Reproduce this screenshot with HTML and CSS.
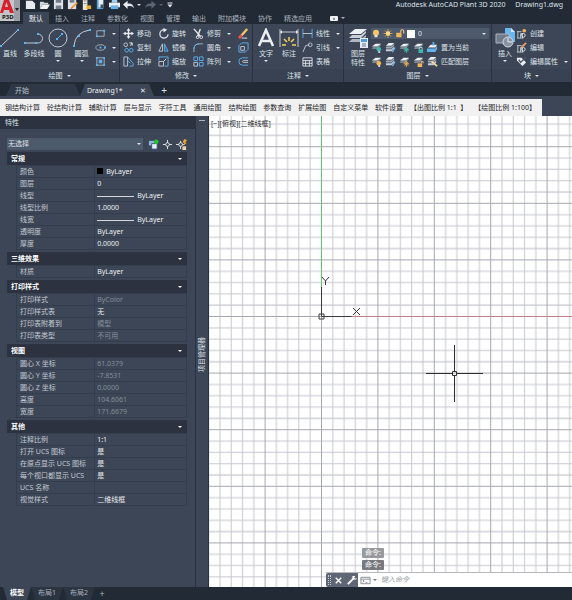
FILE: index.html
```html
<!DOCTYPE html>
<html lang="zh-CN">
<head>
    <meta charset="UTF-8">
    <meta name="viewport" content="width=device-width, initial-scale=1.0">
    <title>Autodesk AutoCAD Plant 3D 2020 - Drawing1.dwg</title>
    <link rel="stylesheet" href="styles.css">
</head>
<body>

<!-- Shared icons -->
<svg class="sprite" aria-hidden="true">
    <symbol id="i-bulb" viewBox="0 0 12 12"><circle cx="6" cy="5" r="4" fill="#f6c667"/><path d="M4 8h4v3H4z" fill="#e8e0d0"/></symbol>
    <symbol id="i-sun" viewBox="0 0 12 12"><path d="M6 0v12M0 6h12M2 2l8 8M10 2l-8 8" stroke="#f2b04a"/><circle cx="6" cy="6" r="3" fill="#ffd98a"/></symbol>
    <symbol id="i-lock" viewBox="0 0 12 12"><path d="M1 5h7v6H1z" fill="#f3b65c"/><path d="M7 5V3q0-2 2-2t2 2v3" fill="none" stroke="#f3c987" stroke-width="1.5"/></symbol>
    <symbol id="i-layer" viewBox="0 0 12 12"><path d="M1 5l4-3h6L7 5z" fill="#eef1f4"/><path d="M1 7l1-1h5l3-3h1L7 7z" fill="#b9c1cb"/></symbol>
    <symbol id="i-layers" viewBox="0 0 12 12"><path d="M1 4l3-3h6L7 4z" fill="#eef1f4"/><path d="M1 5h6l3-3v2L7 7H1z" fill="#9ea8b5"/><path d="M1 8h6l3-3v2L7 10H1z" fill="#c6cdd6"/></symbol>
    <symbol id="i-teal" viewBox="0 0 12 12"><use href="#i-layer"/><circle cx="8.500" cy="8" r="2.500" fill="#3fb8b4"/><path d="M8 10h2v2H8z" fill="#d5dbe2"/></symbol>
    <symbol id="i-yellow" viewBox="0 0 12 12"><use href="#i-layer"/><circle cx="8.500" cy="8" r="2.500" fill="#f5bb55"/><path d="M8 10h2v2H8z" fill="#d5dbe2"/></symbol>
    <symbol id="i-pen" viewBox="0 0 12 12"><use href="#i-layers"/><path d="M8 11l3-5" stroke="#69b4ec" stroke-width="1.500"/></symbol>
    <symbol id="i-freeze" viewBox="0 0 12 12"><use href="#i-layer"/><path d="M8 5v7M5 8.500h6M6 6.500l4 4M10 6.500l-4 4" stroke="#46c3b0"/></symbol>
    <symbol id="i-thaw" viewBox="0 0 12 12"><use href="#i-layer"/><path d="M8 5v7M5 8.500h6M6 6.500l4 4M10 6.500l-4 4" stroke="#f1b550"/></symbol>
    <symbol id="i-locked" viewBox="0 0 12 12"><use href="#i-layer"/><path d="M6 8h5v4H6z" fill="#3fb8b4"/><path d="M7 8V6h3v2" fill="none" stroke="#8fded8"/></symbol>
    <symbol id="i-unlocked" viewBox="0 0 12 12"><use href="#i-layer"/><path d="M5 8h5v4H5z" fill="#f3b65c"/><path d="M9 8V6h2v2" fill="none" stroke="#f3c987"/></symbol>
    <symbol id="i-block" viewBox="0 0 12 12"><path d="M1 4h5M1 11h7M2 4v7M5 11V6h2v5" fill="none" stroke="#c3cad4"/><circle cx="8" cy="8" r="2" fill="none" stroke="#dfe4ea"/></symbol>
</svg>

<header class="titlebar">
    <button class="app-logo" aria-label="应用程序菜单">
        <svg viewBox="0 0 20 21"><path d="M0 0h20v21H0z" fill="#c3c5c8"/><path d="M14 0h6v21h-6z" fill="#9b9fa5"/><path d="M0 13L4 0h5l5 13h-4L9 10H4l-1 3z" fill="#d8202c"/><path d="M5 7l1.500-5L8 7z" fill="#f0c4c6"/><path d="M15 8h4l-2 3z" fill="#222"/></svg>
        <span>P3D</span>
    </button>
    <div class="quick-access">
        <button aria-label="新建"><svg viewBox="0 0 12 12"><path d="M1 2h7l3 3v6H1z" fill="#e7eaee"/></svg></button>
        <button aria-label="打开"><svg viewBox="0 0 12 12"><path d="M1 3h4l1 1h4v2H4l-3 5z" fill="#cfd4da"/><path d="M4 6h8l-3 5H1z" fill="#f0f2f4"/></svg></button>
        <button aria-label="保存"><svg viewBox="0 0 12 12"><path d="M1 1h10v10H1z" fill="#dfe3e8"/><path d="M3 1h6v3H3zM3 7h6v4H3z" fill="#717b8a"/></svg></button>
        <button aria-label="另存为"><svg viewBox="0 0 12 12"><path d="M1 1h9v10H1z" fill="#dfe3e8"/><path d="M3 1h5v3H3z" fill="#717b8a"/><path d="M5 10l6-6" stroke="#e9a23c" stroke-width="2"/><path d="M4 11l2-2" stroke="#d44"/></svg></button>
        <button aria-label="项目"><svg viewBox="0 0 12 12"><path d="M2 0h5v12H2z" fill="#e9e5d5"/><path d="M3 2h3M3 5h3" stroke="#7d838c"/><path d="M6 7h5v4H6z" fill="#e8b030"/></svg></button>
        <button aria-label="打印预览"><svg viewBox="0 0 12 12"><path d="M2 0h7v11H2z" fill="#5da7dd"/><path d="M4 1h5v8H4z" fill="#e6edf4"/><path d="M6 6h3v4H6z" fill="#47505f"/></svg></button>
        <button aria-label="打印"><svg viewBox="0 0 12 12"><path d="M3 0h6v4H3z" fill="#9fd0f5"/><path d="M0 4h12v5H0z" fill="#eceff2"/><path d="M2 7h8v4H2z" fill="#68b1e8"/></svg></button>
        <button aria-label="放弃"><svg viewBox="0 0 12 12"><path d="M0 6l5-4v3q6-1 7 5-2-3-7-2v3z" fill="#e7eaee"/></svg></button>
        <button class="tiny" aria-label="放弃列表"><i class="caret"></i></button>
        <button aria-label="重做"><svg viewBox="0 0 12 12"><path d="M12 6L7 2v3Q1 4 0 10q2-3 7-2v3z" fill="#5b6574"/></svg></button>
        <button class="tiny" aria-label="重做列表"><i class="caret dim"></i></button>
        <button class="tiny" aria-label="自定义"><svg viewBox="0 0 12 12"><path d="M1 2h10" stroke="#e7eaee" stroke-width="2"/><path d="M1 5h10l-5 6z" fill="#e7eaee"/></svg></button>
    </div>
    <h1>Autodesk AutoCAD Plant 3D 2020 <span>Drawing1.dwg</span></h1>
</header>

<nav class="ribbon-tabs">
    <a class="active" href="#home">默认</a>
    <a href="#insert">插入</a>
    <a href="#annotate">注释</a>
    <a href="#parametric">参数化</a>
    <a href="#view">视图</a>
    <a href="#manage">管理</a>
    <a href="#output">输出</a>
    <a href="#addins">附加模块</a>
    <a href="#collaborate">协作</a>
    <a href="#apps">精选应用</a>
    <button aria-label="功能区显示"><svg viewBox="0 0 8 5"><rect width="8" height="5" rx="1" fill="#eef0f3"/><path d="M3 3.500l1-2 1 2z" fill="#232b36"/></svg><i class="caret"></i></button>
</nav>

<section class="ribbon">
    <div class="panel">
        <div class="tools draw">
            <button class="big"><svg viewBox="0 0 20 20"><path d="M1 18L18 2" stroke="#c3cad4" fill="none"/><path d="M0 17h2v2H0zM17 1h2v2h-2z" fill="#5fb0ee"/></svg>直线</button>
            <button class="big"><svg viewBox="0 0 20 20"><path d="M1 15h13a4.500 4.500 0 0 0 0-9" stroke="#c3cad4" fill="none"/><path d="M0 14h2v2H0zM13 5h2v2h-2zM11 14h2v2h-2z" fill="#5fb0ee"/></svg>多段线</button>
            <button class="big"><svg viewBox="0 0 20 20"><circle cx="10" cy="10" r="9" stroke="#c3cad4" fill="none"/><path d="M9 11l5-5" stroke="#5fb0ee"/><path d="M8 10h2v2H8zM13 5h2v2h-2z" fill="#5fb0ee"/></svg>圆<i class="caret"></i></button>
            <button class="big"><svg viewBox="0 0 20 20"><path d="M2 18Q3 4 18 2" stroke="#c3cad4" fill="none"/><path d="M1 17h2v2H1zM6 7h2v2H6zM17 1h2v2h-2z" fill="#5fb0ee"/></svg>圆弧<i class="caret"></i></button>
            <div class="stack">
                <button class="tool" aria-label="矩形"><svg viewBox="0 0 12 12"><path d="M2 3h8v6H2z" stroke="#aab3c0" fill="none"/><path d="M1 8h2v2H1zM9 2h2v2H9z" fill="#5fb0ee"/></svg><i class="caret"></i></button>
                <button class="tool" aria-label="椭圆"><svg viewBox="0 0 12 12"><ellipse cx="6" cy="6" rx="5" ry="3" stroke="#aab3c0" fill="none"/><path d="M5 5h2v2H5zM10 5h2v2h-2z" fill="#5fb0ee"/></svg><i class="caret"></i></button>
                <button class="tool" aria-label="图案填充"><svg viewBox="0 0 12 12"><path d="M2 2h8v8H2z" stroke="#aab3c0" fill="none"/><path d="M4 4h4v4H4z" fill="#5fb0ee"/><path d="M1 1h2v2H1zM9 1h2v2H9zM1 9h2v2H1zM9 9h2v2H9z" fill="#5fb0ee"/></svg><i class="caret"></i></button>
            </div>
        </div>
        <button class="panel-title">绘图<i class="caret"></i></button>
    </div>

    <div class="panel">
        <div class="tools modify">
            <div class="stack">
                <button class="tool"><svg viewBox="0 0 12 12"><path d="M6 1v10M1 6h10" stroke="#e7eaee" stroke-width="1.500"/><path d="M6 0l2 3H4zM6 12l2-3H4zM0 6l3-2v4zM12 6L9 4v4z" fill="#e7eaee"/></svg>移动</button>
                <button class="tool"><svg viewBox="0 0 12 12"><circle cx="3" cy="3" r="2" stroke="#c3cad4" fill="none"/><path d="M7 1h3v3M8 4l2-3" stroke="#e7eaee" fill="none"/><circle cx="4" cy="9" r="2" stroke="#5fb0ee" fill="none"/><circle cx="9" cy="9" r="2" stroke="#5fb0ee" fill="none"/></svg>复制</button>
                <button class="tool"><svg viewBox="0 0 12 12"><path d="M1 1h4v10H1z" stroke="#c3cad4" fill="none"/><path d="M5 1l6 7v3H7M5 5l3 3" stroke="#5fb0ee" fill="none"/></svg>拉伸</button>
            </div>
            <div class="stack">
                <button class="tool"><svg viewBox="0 0 12 12"><path d="M7 2a4.500 4.500 0 1 0 4 5" stroke="#d5dae1" stroke-width="1.500" fill="none"/><path d="M6 0l4 2-4 3z" fill="#e7eaee"/></svg>旋转</button>
                <button class="tool"><svg viewBox="0 0 12 12"><path d="M5 2v8H1z" stroke="#c3cad4" fill="none"/><path d="M7 2v8h4z" stroke="#5fb0ee" fill="#39648c"/></svg>镜像</button>
                <button class="tool"><svg viewBox="0 0 12 12"><path d="M1 5V1h10v10H7" stroke="#5fb0ee" fill="none"/><path d="M1 6h5v5H1z" stroke="#c3cad4" fill="none"/><path d="M6 6l3-3" stroke="#e7eaee"/></svg>缩放</button>
            </div>
            <div class="stack">
                <button class="tool"><svg viewBox="0 0 12 12"><path d="M1 1l7 8M8 1L5 9" stroke="#e7eaee" stroke-width="1.500"/><circle cx="9" cy="10" r="1.500" stroke="#e7eaee" fill="none"/><circle cx="5" cy="10" r="1.500" stroke="#e7eaee" fill="none"/></svg>修剪<i class="caret"></i></button>
                <button class="tool"><svg viewBox="0 0 12 12"><path d="M1 11V8q0-6 6-6h4" stroke="#aab3c0" fill="none"/><path d="M1 8q0-6 6-6" stroke="#5fb0ee" fill="none"/></svg>圆角<i class="caret"></i></button>
                <button class="tool"><svg viewBox="0 0 12 12"><path d="M1 1h4v4H1zM7 1h4v4H7zM7 7h4v4H7z" stroke="#5fb0ee" fill="none"/><path d="M1 7h4v4H1z" stroke="#c3cad4" fill="none"/></svg>阵列<i class="caret"></i></button>
            </div>
            <div class="stack">
                <button class="tool" aria-label="删除"><svg viewBox="0 0 12 12"><path d="M4 8l6-7" stroke="#f3c66c" stroke-width="2.500"/><path d="M1 11l3-3" stroke="#e05a4e" stroke-width="3"/><path d="M4 11h6" stroke="#e7eaee"/></svg></button>
                <button class="tool" aria-label="分解"><svg viewBox="0 0 12 12"><path d="M1 4l3-3h7v7l-3 3H1z" stroke="#5fb0ee" fill="none"/><path d="M3 5h4v4H3z" stroke="#c3cad4" fill="none"/></svg></button>
                <button class="tool" aria-label="偏移"><svg viewBox="0 0 12 12"><path d="M11 2H5a4 4 0 0 0 0 8h6" stroke="#5fb0ee" fill="none"/><path d="M11 5H6a1 1 0 0 0 0 2h5" stroke="#c3cad4" fill="none"/></svg></button>
            </div>
        </div>
        <button class="panel-title">修改<i class="caret"></i></button>
    </div>

    <div class="panel">
        <div class="tools annotate">
            <button class="big"><svg viewBox="0 0 20 20"><path d="M3 18L10 2l7 16M6 13h8" stroke="#eceff2" stroke-width="2.500" fill="none"/></svg>文字<i class="caret"></i></button>
            <button class="big"><svg viewBox="0 0 20 20"><path d="M1 1v18M19 1v18M1 4h18" stroke="#c3cad4" fill="none"/><path d="M3 2L1 4l2 2zM17 2l2 2-2 2z" fill="#e7eaee"/><path d="M10 9v4M5 11l3 3M15 11l-3 3M3 17h4M13 17h4" stroke="#f5d264" stroke-width="1.500"/></svg>标注</button>
            <div class="stack">
                <button class="tool"><svg viewBox="0 0 12 12"><path d="M1 1v10M11 1v10" stroke="#5fb0ee"/><path d="M1 6h10" stroke="#c3cad4"/></svg>线性<i class="caret"></i></button>
                <button class="tool"><svg viewBox="0 0 12 12"><path d="M1 11l3-7 4-1" stroke="#c3cad4" fill="none"/><circle cx="9" cy="3" r="2" stroke="#c3cad4" fill="none"/></svg>引线<i class="caret"></i></button>
                <button class="tool"><svg viewBox="0 0 12 12"><path d="M1 2h10v9H1zM1 5h10M1 8h10M4 5v6M8 5v6" stroke="#dfe3e8" fill="none"/></svg>表格</button>
            </div>
        </div>
        <button class="panel-title">注释<i class="caret"></i></button>
    </div>

    <div class="panel">
        <div class="tools layers">
            <button class="big two-line"><svg viewBox="0 0 20 20"><path d="M1 6l6-5h12l-6 5z" fill="#eef1f4"/><path d="M1 10l3-3h9l5-4v2l-5 5z" fill="#c9cfd7"/><path d="M1 14l3-3h9l5-4v2l-5 5z" fill="#aeb6c1"/><path d="M12 10h8v10h-8z" fill="#e5eef7"/><path d="M13 11h6v3h-6z" fill="#4e9ee0"/><path d="M14 16h4M14 18h4" stroke="#6b7686"/></svg>图层<br>特性</button>
            <div class="stack layer-stack">
                <label class="layer-combo">
                    <svg><use href="#i-bulb"/></svg>
                    <svg><use href="#i-sun"/></svg>
                    <svg><use href="#i-lock"/></svg>
                    <span class="swatch"></span>
                    <select aria-label="图层"><option>0</option></select>
                    <i class="caret"></i>
                </label>
                <div class="icon-row">
                    <button aria-label="关"><svg><use href="#i-teal"/></svg></button>
                    <button aria-label="隔离"><svg><use href="#i-pen"/></svg></button>
                    <button aria-label="冻结"><svg><use href="#i-freeze"/></svg></button>
                    <button aria-label="锁定"><svg><use href="#i-locked"/></svg></button>
                    <button class="tool"><svg viewBox="0 0 12 12"><path d="M1 6l3-3h7L9 6z" fill="#eef1f4"/><path d="M0 7h9l2-3v4l-2 3H0z" fill="#63b1ea"/><path d="M7 0v4" stroke="#63b1ea" stroke-width="2"/></svg>置为当前</button>
                </div>
                <div class="icon-row">
                    <button aria-label="打开所有图层"><svg><use href="#i-yellow"/></svg></button>
                    <button aria-label="取消隔离"><svg><use href="#i-pen"/></svg></button>
                    <button aria-label="解冻"><svg><use href="#i-thaw"/></svg></button>
                    <button aria-label="解锁"><svg><use href="#i-unlocked"/></svg></button>
                    <button class="tool"><svg viewBox="0 0 12 12"><use href="#i-layers"/><path d="M5 6l6 5" stroke="#f3d9a0" stroke-width="2"/></svg>匹配图层</button>
                </div>
            </div>
        </div>
        <button class="panel-title">图层<i class="caret"></i></button>
    </div>

    <div class="panel">
        <div class="tools blocks">
            <button class="big"><svg viewBox="0 0 20 20"><path d="M10 0h6l4 4v10H10z" fill="#6ab8f2"/><path d="M16 0v4h4z" fill="#d3eafb"/><path d="M1 6h13v9H1z" fill="#707b8b" stroke="#aab3c0"/><circle cx="13" cy="14" r="5" fill="#8893a1" stroke="#d5dae1"/><path d="M13 10v4h4" stroke="#e7eaee" fill="none"/></svg>插入<i class="caret"></i></button>
            <div class="stack">
                <button class="tool"><svg viewBox="0 0 12 12"><use href="#i-block"/><circle cx="9" cy="3" r="2" fill="#f3b65c"/></svg>创建</button>
                <button class="tool"><svg viewBox="0 0 12 12"><use href="#i-block"/><path d="M6 6l5-5" stroke="#e89a6a" stroke-width="2"/></svg>编辑</button>
                <button class="tool"><svg viewBox="0 0 12 12"><path d="M1 2h5l5 5-4 4-6-6z" fill="#eceff2"/><path d="M3 4l2 3 6-6" stroke="#4b5666" stroke-width="1.500" fill="none"/></svg>编辑属性<i class="caret"></i></button>
            </div>
        </div>
        <button class="panel-title">块<i class="caret"></i></button>
    </div>
</section>

<nav class="file-tabs">
    <a class="file-tab start" href="#start">开始</a>
    <a class="file-tab current" href="#drawing1">Drawing1* <span>✕</span></a>
    <button aria-label="新图形">+</button>
</nav>

<div class="menu-row">
    <nav class="menubar">
        <a href="#m1">钢结构计算</a>
        <a href="#m2">砼结构计算</a>
        <a href="#m3">辅助计算</a>
        <a href="#m4">层与显示</a>
        <a href="#m5">字符工具</a>
        <a href="#m6">通用绘图</a>
        <a href="#m7">结构绘图</a>
        <a href="#m8">参数查询</a>
        <a href="#m9">扩展绘图</a>
        <a href="#m10">自定义菜单</a>
        <a href="#m11">软件设置</a>
        <a href="#m12">【出图比例 1:1 &nbsp;】</a>
        <a href="#m13">【绘图比例 1:100】</a>
    </nav>
</div>

<main class="workspace">
    <aside class="palette">
        <h2>特性</h2>
        <div class="selector">
            <div class="select-wrap">
                <select aria-label="选择对象"><option>无选择</option></select>
                <i class="caret"></i>
            </div>
            <button aria-label="切换 PICKADD"><svg viewBox="0 0 12 12"><path d="M1 2h6v5H1z" fill="#8fb6dc"/><path d="M4 5h6v6H4z" fill="#e7eef5" stroke="#34547a"/><circle cx="9" cy="3" r="2.500" fill="#28c22c"/></svg></button>
            <button aria-label="选择对象"><svg viewBox="0 0 12 12"><path d="M6 1v10M1 6h10" stroke="#e7eaee"/><circle cx="6" cy="6" r="2" fill="#3c4656" stroke="#e7eaee"/></svg></button>
            <button aria-label="快速选择"><svg viewBox="0 0 12 12"><path d="M5 2v9M0 6h9" stroke="#e7eaee"/><circle cx="5" cy="6" r="2" fill="#3c4656" stroke="#e7eaee"/><path d="M9 0l3 1-2 3h2L8 7l1-3H7z" fill="#f0a432"/><path d="M7 8h4v4H7z" fill="#e8d7b0"/></svg></button>
        </div>

        <section class="category">
            <button class="category-head">常规<i class="caret"></i></button>
            <table>
                <tr><th>颜色</th><td><span class="color-chip"></span>ByLayer</td></tr>
                <tr><th>图层</th><td>0</td></tr>
                <tr><th>线型</th><td><span class="line-sample"></span>ByLayer</td></tr>
                <tr><th>线型比例</th><td>1.0000</td></tr>
                <tr><th>线宽</th><td><span class="line-sample"></span>ByLayer</td></tr>
                <tr><th>透明度</th><td>ByLayer</td></tr>
                <tr><th>厚度</th><td>0.0000</td></tr>
            </table>
        </section>
        <section class="category">
            <button class="category-head">三维效果<i class="caret"></i></button>
            <table>
                <tr><th>材质</th><td>ByLayer</td></tr>
            </table>
        </section>
        <section class="category">
            <button class="category-head">打印样式<i class="caret"></i></button>
            <table>
                <tr><th>打印样式</th><td class="readonly">ByColor</td></tr>
                <tr><th>打印样式表</th><td>无</td></tr>
                <tr><th>打印表附着到</th><td class="readonly">模型</td></tr>
                <tr><th>打印表类型</th><td class="readonly">不可用</td></tr>
            </table>
        </section>
        <section class="category">
            <button class="category-head">视图<i class="caret"></i></button>
            <table>
                <tr><th>圆心 X 坐标</th><td class="readonly">61.0379</td></tr>
                <tr><th>圆心 Y 坐标</th><td class="readonly">-7.8531</td></tr>
                <tr><th>圆心 Z 坐标</th><td class="readonly">0.0000</td></tr>
                <tr><th>高度</th><td class="readonly">104.6061</td></tr>
                <tr><th>宽度</th><td class="readonly">171.6679</td></tr>
            </table>
        </section>
        <section class="category">
            <button class="category-head">其他<i class="caret"></i></button>
            <table>
                <tr><th>注释比例</th><td>1:1</td></tr>
                <tr><th>打开 UCS 图标</th><td>是</td></tr>
                <tr><th>在原点显示 UCS 图标</th><td>是</td></tr>
                <tr><th>每个视口都显示 UCS</th><td>是</td></tr>
                <tr><th>UCS 名称</th><td></td></tr>
                <tr><th>视觉样式</th><td>二维线框</td></tr>
            </table>
        </section>
    </aside>

    <div class="side-strip">
        <span class="grip"></span>
        <span class="strip-title">项目管理器</span>
    </div>

    <section class="canvas">
        <svg class="drawing" aria-hidden="true">
            <defs>
                <pattern id="grid" x="112" y="200" width="56.400" height="56.600" patternUnits="userSpaceOnUse">
                    <path d="M11.800 0v57M23 0v57M34.300 0v57M45.600 0v57M0 11.800h57M0 23.100h57M0 34.500h57M0 45.800h57" stroke="#c6c8ce"/>
                    <path d="M.5 0v57M0 .5h57" stroke="#a4a7ae"/>
                </pattern>
            </defs>
            <rect width="100%" height="100%" fill="url(#grid)"/>
            <path d="M112.500 0v172" stroke="#62c46c"/>
            <path d="M142 200.500h2000" stroke="#c08086"/>
            <!-- UCS icon -->
            <path d="M112.500 171v29.500h30M110 198h5v5h-5z" stroke="#3a3a3e" fill="none"/>
            <path d="M113 161l3.500 4 3.500-4M116.500 165v4M144 192l7 7M151 192l-7 7" stroke="#3a3a3e" fill="none"/>
            <!-- Crosshair -->
            <path d="M217 257.500h27M248 257.500h26M245.500 229v27M245.500 260v26M243.500 255.500h4v4h-4z" stroke="#2e2e32" fill="none"/>
        </svg>
        <div class="view-label">[−][俯视][二维线框]</div>
        <div class="command">
            <p class="history old">命令:</p>
            <p class="history">命令:</p>
            <div class="command-line">
                <span class="handle"><i class="dots"></i></span>
                <button aria-label="关闭"><svg viewBox="0 0 12 12"><path d="M3 3l6 6M9 3l-6 6" stroke="#fff" stroke-width="1.500"/></svg></button>
                <button aria-label="自定义"><svg viewBox="0 0 12 12"><path d="M2 10l6-6" stroke="#fff" stroke-width="2"/><path d="M7 1v4h4l1-2-2 1-1-1 1-2z" fill="#fff"/></svg></button>
                <label class="command-input">
                    <svg viewBox="0 0 12 9"><path d="M1 1h10v7H1zM1 3h10" stroke="#85898f" fill="none"/><path d="M3 4l1.500 1L3 6.500M6 6.500h2" stroke="#85898f" fill="none"/></svg>
                    <i class="caret"></i>
                    <input type="text" placeholder="键入命令" aria-label="键入命令">
                </label>
            </div>
        </div>
    </section>
</main>

<footer class="layout-tabs">
    <a class="active" href="#model">模型</a>
    <a href="#layout1">布局1</a>
    <a href="#layout2">布局2</a>
    <button aria-label="新建布局">+</button>
</footer>

</body>
</html>
```
FILE: styles.css
```css
* {
    box-sizing: border-box;
}
body {
    margin: 0;
    min-height: 100vh;
    display: flex;
    flex-direction: column;
    background: #212a35;
    color: #dfe3e9;
    font: 7px/10px "Noto Sans", "Noto Sans CJK SC", sans-serif;
}
a {
    color: inherit;
    text-decoration: none;
}
button, select, input {
    margin: 0;
    padding: 0;
    border: 0;
    background: none;
    color: inherit;
    font: inherit;
}
button svg, label svg {
    display: block;
    width: 11px;
    height: 11px;
    flex: none;
}
select {
    appearance: none;
}
.sprite {
    position: absolute;
    width: 0;
    height: 0;
}
.caret {
    flex: none;
    border: 2px solid transparent;
    border-top-color: currentColor;
    border-bottom: 0;
}
.caret.dim {
    color: #5b6574;
}

/* Title bar and tabs */
.titlebar {
    display: flex;
    height: 12px;
}
.app-logo {
    position: relative;
    z-index: 1;
    width: 20px;
    height: 21px;
}
.app-logo svg {
    width: 20px;
    height: 21px;
}
.app-logo span {
    position: absolute;
    left: 2px;
    bottom: 0;
    color: #111;
    font-weight: bold;
    font-size: 6px;
    line-height: 7px;
}
.quick-access {
    display: flex;
    align-items: center;
    gap: 3px;
    height: 9px;
    margin-left: 5px;
}
.quick-access .tiny {
    display: flex;
    width: 5px;
}
.quick-access .tiny svg {
    width: 6px;
    height: 6px;
}
.titlebar h1 {
    margin: 0 9px 0 auto;
    font-size: 7px;
    font-weight: normal;
    line-height: 10px;
}
.titlebar h1 span {
    margin-left: 8px;
}
.ribbon-tabs {
    display: flex;
    height: 12px;
    padding-left: 23px;
    color: #aab2be;
    line-height: 13px;
}
.ribbon-tabs a {
    padding: 0 6px;
}
.ribbon-tabs .active {
    background: #3c4656;
    color: #f2f4f6;
}
.ribbon-tabs button {
    display: flex;
    align-items: center;
    gap: 3px;
    margin-left: 12px;
}
.ribbon-tabs svg {
    width: 8px;
    height: 5px;
}

/* Ribbon */
.ribbon {
    display: grid;
    grid-template-columns: 120fr 133fr 91fr 148fr 80fr;
    height: 58px;
    background: #3c4656;
}
.panel {
    display: flex;
    flex-direction: column;
    justify-content: space-between;
    border-right: 1px solid #2a323f;
    white-space: nowrap;
}
.tools {
    display: flex;
    justify-content: space-between;
    padding: 4px 3px 0;
}
.draw {
    padding-left: 0;
}
.panel-title {
    display: flex;
    align-items: center;
    justify-content: center;
    gap: 4px;
    height: 13px;
    background: #384252;
}
.big {
    display: flex;
    flex-direction: column;
    align-items: center;
    line-height: 9px;
}
.big svg {
    width: 20px;
    height: 20px;
    margin-bottom: 1px;
}
.big .caret {
    margin-top: 2px;
}
.stack {
    display: flex;
    flex-direction: column;
    gap: 3px;
}
.tool {
    display: flex;
    align-items: center;
    gap: 3px;
    height: 11px;
}
.tool .caret {
    margin-left: 3px;
}
.layers {
    padding-left: 4px;
    padding-right: 2px;
    gap: 3px;
}
.layer-stack {
    flex: 1;
}
.layer-combo {
    display: flex;
    align-items: center;
    gap: 2px;
    height: 11px;
    padding-right: 3px;
    background: #4d5a6c;
}
.layer-combo svg {
    width: 10px;
    height: 9px;
}
.swatch {
    width: 8px;
    height: 8px;
    background: #fff;
}
.layer-combo select {
    flex: 1;
    padding-left: 1px;
}
.icon-row {
    display: flex;
    gap: 3px;
}

/* File tabs and menu bar */
.file-tabs {
    display: flex;
    align-items: stretch;
    height: 17px;
    padding: 2px 0 0 6px;
    border-bottom: 3px solid #3c4656;
}
.file-tab {
    padding: 0 9px;
    background: #2f3846;
    clip-path: polygon(5px 0, calc(100% - 5px) 0, 100% 100%, 0 100%);
    color: #bcc3cd;
    line-height: 13px;
}
.file-tab.start {
    width: 74px;
}
.file-tab.current {
    display: flex;
    justify-content: space-between;
    width: 74px;
    padding: 0 8px 0 7px;
    background: #3c4656;
    color: #eef0f3;
}
.file-tabs button {
    width: 20px;
    font-size: 10px;
    line-height: 12px;
}
.menu-row {
    padding-right: 30px;
    background: #3c4656;
}
.menubar {
    display: flex;
    justify-content: space-between;
    height: 17px;
    padding: 0 6px 0 5px;
    background: #f1f1f2;
    color: #1d1d1f;
    line-height: 17px;
    white-space: nowrap;
}

/* Properties palette */
.workspace {
    flex: 1;
    display: flex;
    background: #3c4656;
}
.palette {
    flex: none;
    width: 195px;
    padding-right: 8px;
}
.palette h2 {
    margin: 0 -8px 9px 0;
    padding-left: 5px;
    background: #2c323f;
    font-size: 7px;
    font-weight: normal;
    line-height: 13px;
}
.selector {
    display: flex;
    align-items: center;
    gap: 3px;
    margin: 0 0 2px 7px;
}
.select-wrap {
    flex: 1;
    display: flex;
    align-items: center;
    height: 12px;
    margin-right: 2px;
    padding-right: 2px;
    background: #4d5a6c;
}
.select-wrap select {
    flex: 1;
    padding-left: 1px;
}
.category {
    margin: 0 0 2px 7px;
}
.category-head {
    display: flex;
    align-items: center;
    justify-content: space-between;
    width: 100%;
    height: 13px;
    padding: 0 5px 0 4px;
    background: #2c323f;
    color: #fff;
    font-weight: bold;
}
.category table {
    width: calc(100% - 9px);
    margin-left: 9px;
    border-collapse: collapse;
    table-layout: fixed;
}
.category th, .category td {
    height: 12px;
    padding: 0 3px;
    border: 1px solid #333d4b;
    line-height: 11px;
    white-space: nowrap;
}
.category th {
    width: 46%;
    color: #c2c8d1;
    font-weight: normal;
    text-align: left;
}
.category td {
    padding: 0 2px;
    color: #eceef1;
}
.category .readonly {
    color: #858e9b;
}
.color-chip {
    display: inline-block;
    width: 6px;
    height: 6px;
    margin-right: 3px;
    background: #000;
}
.line-sample {
    display: inline-block;
    width: 37px;
    margin-right: 3px;
    border-top: 1px solid #d5d9df;
    vertical-align: middle;
}
.side-strip {
    display: flex;
    flex: none;
    flex-direction: column;
    align-items: center;
    width: 14px;
    border: solid #2a323f;
    border-width: 0 1px;
}
.grip {
    width: 6px;
    height: 1px;
    margin-top: 4px;
    background: #aab2be;
}
.strip-title {
    margin: auto 0;
    writing-mode: vertical-rl;
    text-orientation: sideways;
    transform: rotate(180deg);
}

/* Model space */
.canvas {
    position: relative;
    flex: 1;
    display: flex;
    flex-direction: column;
    justify-content: space-between;
    background: #fff;
    color: #2b2b2e;
}
.drawing {
    position: absolute;
    width: 100%;
    height: 100%;
}
.view-label {
    position: relative;
    padding: 3px 2px;
}
.command {
    position: relative;
    margin-left: 117px;
}
.history {
    width: 22px;
    margin: 0 0 2px 36px;
    border-radius: 1px;
    background: #77797d;
    color: #fff;
    text-align: center;
}
.history.old {
    background: #97999d;
}
.command-line {
    display: flex;
    height: 15px;
    border-top: 1px solid #b5b7bb;
    background: #fff;
}
.command-line button, .handle {
    display: flex;
    align-items: center;
    justify-content: center;
    width: 13px;
    background: #5f6675;
}
.handle {
    width: 6px;
    border-radius: 2px 0 0 2px;
}
.dots {
    width: 3px;
    height: 10px;
    border: dotted #c5c9d0;
    border-width: 0 1px;
}
.command-input {
    flex: 1;
    display: flex;
    align-items: center;
    gap: 2px;
    padding-left: 2px;
}
.command-input .caret {
    color: #777;
}
.command-input input {
    flex: 1;
    min-width: 0;
    padding-left: 2px;
}
.command-input input::placeholder {
    color: #9b9da1;
    font-style: italic;
}

/* Layout tabs */
.layout-tabs {
    display: flex;
    height: 13px;
    padding-left: 3px;
    background: #212a35;
    color: #aab2be;
    line-height: 12px;
}
.layout-tabs a {
    padding: 0 7px;
    background: #2b3441;
    clip-path: polygon(0 0, 100% 0, calc(100% - 4px) 100%, 4px 100%);
}
.layout-tabs .active {
    background: #3c4656;
    color: #fff;
    font-weight: bold;
}
.layout-tabs button {
    width: 14px;
    font-size: 9px;
}
```
